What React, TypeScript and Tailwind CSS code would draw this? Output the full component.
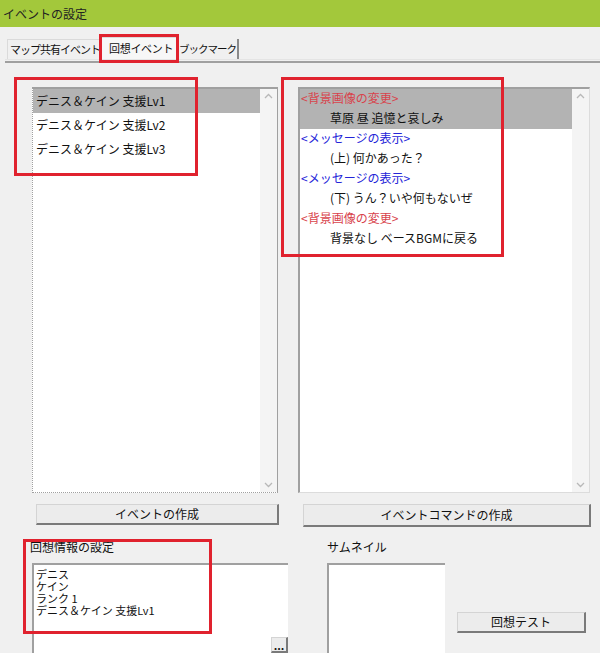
import React from 'react';

const FONT = '"Noto Sans CJK JP", "Noto Sans", sans-serif';

const leftItems = ['デニス＆ケイン 支援Lv1', 'デニス＆ケイン 支援Lv2', 'デニス＆ケイン 支援Lv3'];

const commands = [
    { text: '<背景画像の変更>', kind: 'red', indent: false, sel: true },
    { text: '草原 昼 追憶と哀しみ', kind: 'plain', indent: true, sel: true },
    { text: '<メッセージの表示>', kind: 'blue', indent: false, sel: false },
    { text: '(上) 何かあった？', kind: 'plain', indent: true, sel: false },
    { text: '<メッセージの表示>', kind: 'blue', indent: false, sel: false },
    { text: '(下) うん？いや何もないぜ', kind: 'plain', indent: true, sel: false },
    { text: '<背景画像の変更>', kind: 'red', indent: false, sel: false },
    { text: '背景なし ベースBGMに戻る', kind: 'plain', indent: true, sel: false },
];

const infoLines = ['デニス', 'ケイン', 'ランク 1', 'デニス＆ケイン 支援Lv1'];

// simple up/down arrows of a win32 scrollbar
const ScrollBar = () => (
    <div className="w-[17px] shrink-0 bg-[#f4f4f4] flex flex-col justify-between items-center py-[4px]">
        <svg width="9" height="6" viewBox="0 0 9 6"><path d="M1 5 L4.5 1.5 L8 5" stroke="#b8b8b8" strokeWidth="1.3" fill="none" /></svg>
        <svg width="9" height="6" viewBox="0 0 9 6"><path d="M1 1 L4.5 4.5 L8 1" stroke="#b8b8b8" strokeWidth="1.3" fill="none" /></svg>
    </div>
);

const WinButton = ({ label, className }: { label: string; className: string }) => (
    <button className={`h-[21px] bg-[#ececec] border border-[#d4d4d4] border-r-2 border-b-2 border-r-[#7a7a7a] border-b-[#7a7a7a] text-[12px] text-[#111] flex items-center justify-center whitespace-nowrap ${className}`}>
        {label}
    </button>
);

// annotation frames drawn on top of the dialog
const RedBox = ({ className }: { className: string }) => (
    <div className={`absolute border-[3px] border-[#e0222e] pointer-events-none ${className}`} />
);

export default function App() {
    return (
        <div className="relative w-[600px] h-[653px] overflow-hidden bg-[#f0f0f0] text-[#111]" style={{ fontFamily: FONT }}>
            {/* Title bar */}
            <div className="h-[27px] bg-[#a3c83b] flex items-center px-[3px] text-[12px] text-[#222]">
                イベントの設定
            </div>

            {/* Tabs */}
            <div className="mt-[11px] pl-[7px] flex items-end h-[21px] text-[11px] tracking-[-1px] whitespace-nowrap">
                <div className="h-[20px] w-[92px] shrink-0 pl-[2px] border-l border-t border-[#dadada] flex items-center bg-[#f0f0f0]">マップ共有イベント</div>
                <div className="h-[22px] w-[79px] shrink-0 pl-[9px] border-l border-t border-r border-[#dadada] flex items-center bg-[#f7f7f7] tracking-[-0.3px]">回想イベント</div>
                <div className="h-[20px] w-[61px] shrink-0 pl-[1px] border-r-2 border-[#8a8a8a] flex items-center text-[10.5px]">ブックマーク</div>
            </div>
            <div className="ml-[5px] h-[4px] border-t border-[#e4e4e4] border-b-2 border-b-[#a0a0a0]" />

            {/* Lists */}
            <div className="flex gap-[20px] pl-[32px] pt-[24px]">
                <div className="w-[246px] h-[406px] bg-white flex border-t-2 border-[#a0a0a0] border-l border-b border-r [border-left-style:dotted] [border-bottom-style:dotted]">
                    <div className="flex-1 text-[12px] whitespace-nowrap">
                        {leftItems.map((t, i) => (
                            <div key={t} className={`h-[24px] pl-[3px] flex items-center ${i === 0 ? 'bg-[#b3b3b3]' : ''}`}>{t}</div>
                        ))}
                    </div>
                    <ScrollBar />
                </div>
                <div className="w-[292px] h-[406px] bg-white flex border-t-2 border-l-2 border-[#a0a0a0] border-r border-b border-r-[#dcdcdc] border-b-[#dcdcdc]">
                    <div className="flex-1 text-[12px] whitespace-nowrap">
                        {commands.map((c, i) => (
                            <div
                                key={i}
                                className={`h-[20px] flex items-center pb-[3px] ${c.indent ? 'pl-[30px]' : 'pl-[1px]'} ${c.sel ? 'bg-[#b3b3b3]' : ''} ${c.kind === 'red' ? 'text-[#d8434c]' : c.kind === 'blue' ? 'text-[#2424d8]' : 'text-[#111]'}`}
                            >
                                {c.text}
                            </div>
                        ))}
                    </div>
                    <ScrollBar />
                </div>
            </div>

            {/* Action buttons */}
            <div className="flex pl-[36px] pt-[11px]">
                <WinButton label="イベントの作成" className="w-[243px]" />
                <WinButton label="イベントコマンドの作成" className="w-[288px] ml-[24px] h-[23px]" />
            </div>

            {/* Bottom section */}
            <div className="flex pt-[12px]">
                <div className="pl-[30px] flex flex-col">
                    <div className="text-[12px] h-[16px] leading-[16px]">回想情報の設定</div>
                    <div className="ml-[2px] mt-[8px] w-[256px] h-[90px] bg-white border-t-2 border-l-2 border-[#a0a0a0] text-[11px] pl-[2px] pt-[3px] flex flex-col justify-between">
                        <div className="flex flex-col">
                            {infoLines.map((l) => (
                                <div key={l} className="h-[12px] leading-[12px] whitespace-nowrap">{l}</div>
                            ))}
                        </div>
                        <div className="self-end w-[17px] h-[16px] bg-[#ececec] border border-[#d4d4d4] border-r-2 border-b-2 border-r-[#7a7a7a] border-b-[#7a7a7a] text-[11px] leading-[8px] flex items-center justify-center font-bold">
                            ...
                        </div>
                    </div>
                </div>
                <div className="pl-[39px] flex flex-col">
                    <div className="text-[12px] h-[16px] leading-[16px]">サムネイル</div>
                    <div className="mt-[8px] w-[118px] h-[90px] bg-white border-t-2 border-l-2 border-[#a0a0a0]" />
                </div>
                <div className="pl-[12px] pt-[73px]">
                    <WinButton label="回想テスト" className="w-[129px]" />
                </div>
            </div>

            {/* Red annotation frames */}
            <RedBox className="left-[99px] top-[34px] w-[80px] h-[29px]" />
            <RedBox className="left-[14px] top-[77px] w-[184px] h-[99px]" />
            <RedBox className="left-[281px] top-[77px] w-[223px] h-[180px]" />
            <RedBox className="left-[23px] top-[539px] w-[189px] h-[95px]" />
        </div>
    );
}
